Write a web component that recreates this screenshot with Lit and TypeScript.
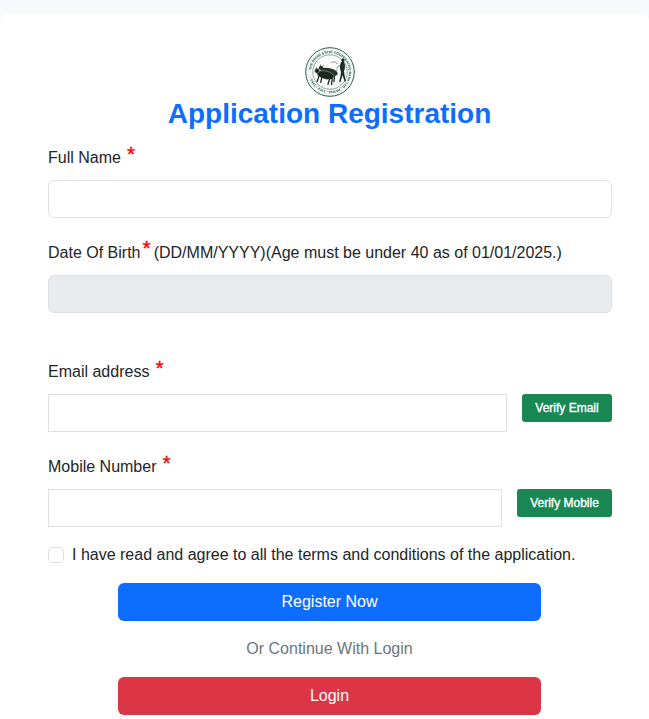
import { LitElement, html, css, svg } from "lit";
import { customElement } from "lit/decorators.js";

const logo = svg`<svg class="logo" viewBox="0 0 50 50" width="50" height="50" aria-hidden="true">
  <defs><path id="ring" d="M25 25 m-18.9 0 a18.9 18.9 0 1 1 37.8 0 a18.9 18.9 0 1 1 -37.8 0"/></defs>
  <circle cx="25" cy="25" r="24.3" fill="#f2f7f3" stroke="#2f5f4c" stroke-width="1"/>
  <circle cx="25" cy="25" r="17.2" fill="#fbfdfb" stroke="#4a7563" stroke-width="0.6"/>
  <text class="ring"><textPath href="#ring" startOffset="2">THE BIHAR STATE COOPERATIVE BANK LTD., PATNA · 1914 - 1964 ·</textPath></text>
  <g transform="rotate(14 21 28)">
    <ellipse class="ox" cx="23.5" cy="24.2" rx="8.6" ry="3.8"/>
    <circle class="ox" cx="14.5" cy="22.4" r="2.3"/>
    <path class="leg" d="M17.5 26 l-.4 6 M29.5 26 l.8 7"/>
    <ellipse class="ox front" cx="20.5" cy="28.2" rx="8.8" ry="4"/>
    <circle class="ox front" cx="11.3" cy="26.1" r="2.4"/>
    <path class="leg" d="M14.5 30 l-.5 7 M17.5 30.5 l.2 6.5 M25.5 30.5 l-.4 6.5 M27.8 29.5 l1 7"/>
    <path class="horn" d="M10.3 24.4 l-.9 -1.8 M12.2 24.4 l.8 -1.8 M13.8 20.8 l-.8 -1.8 M15.5 20.8 l.8 -1.8"/>
  </g>
  <path class="man" d="M38 11.5 a1.7 1.7 0 1 1 -.1 0z M36 15 l3-.3 1 3.6 -.2 3.3 -.8 3 1.1 6.5 .9 3.2 -1.5 .2 -1.9 -6.2 -1.2 3.8 -.9 3 -1.4 -.2 1.4 -6.2 .5 -3.6 -.9 -3.2 -.2 -3 z"/>
  <path class="line" d="M36 17.5 l-3.4 3 -1.4 1.2 M25.6 15.8 c2.4-1.6 5-1.2 6.6 1.2 M26.5 26 l6.5 -3"/>
</svg>`;

@customElement("app-root")
export class AppRoot extends LitElement {
  static styles = css`
    :host {
      display: block;
      height: 719px;
      overflow: hidden;
      background: #f8f9fa;
      font-family: "Liberation Sans", Arial, sans-serif;
      color: #212529;
      font-size: 16px;
    }
    .card {
      margin-top: 14px;
      height: 705px;
      box-sizing: border-box;
      background: #fff;
      border-top-left-radius: 8px;
      border-top-right-radius: 8px;
      padding: 33px 37px 0 48px;
    }
    .head {
      display: flex;
      flex-direction: column;
      align-items: center;
    }
    .logo { display: block; filter: blur(0.25px); }
    .ring {
      font-family: "Liberation Sans", Arial, sans-serif;
      font-size: 3.35px;
      font-weight: 700;
      fill: #24503e;
      letter-spacing: 0.03px;
    }
    .ox { fill: #26352c; }
    .front { fill: #1a271f; stroke: #fbfdfb; stroke-width: 0.3; }
    .leg { fill: none; stroke: #1a271f; stroke-width: 1.3; }
    .horn { fill: none; stroke: #26352c; stroke-width: 0.5; }
    .man { fill: #1f2d24; }
    .line { fill: none; stroke: #33463a; stroke-width: 0.55; }
    h1 {
      margin: 0 1px 0 0;
      height: 34px;
      line-height: 34px;
      font-size: 28px;
      font-weight: 700;
      color: #0d6efd;
    }
    .form { display: flex; flex-direction: column; margin-top: 15px; }
    label {
      display: flex;
      align-items: center;
      height: 24px;
      line-height: 24px;
      margin-bottom: 10px;
    }
    .star {
      color: #f00;
      font-size: 21px;
      line-height: 24px;
      position: relative;
      top: -4px;
      -webkit-text-stroke: 0.35px #f00;
    }
    .gap { margin-left: 6px; }
    .big { margin-left: 2px; top: -5px; }
    .hint { margin-left: 3px; }
    .control {
      display: block;
      width: 100%;
      box-sizing: border-box;
      height: 38px;
      border: 1px solid #dee2e6;
      background: #fff;
      padding: 0;
      margin: 0;
      font: inherit;
      outline: none;
    }
    .round { border-radius: 6px; }
    .field-a { margin-bottom: 23px; }
    .field-b { margin-bottom: 47px; }
    .field-c { margin-bottom: 23px; }
    .field-d { margin-bottom: 20px; }
    .disabled { background: #e9ecef; }
    .row { display: flex; align-items: flex-start; }
    .row .control { flex: 1 1 auto; min-width: 0; }
    .verify {
      flex: none;
      height: 28px;
      box-sizing: border-box;
      border: 0;
      border-radius: 3px;
      background: #198754;
      color: #fff;
      font: 400 12px "Liberation Sans", Arial, sans-serif;
      -webkit-text-stroke: 0.35px #fff;
      padding: 0;
    }
    .email { width: 90px; margin-left: 15px; }
    .mobile { width: 95px; margin-left: 15px; }
    .check {
      display: flex;
      align-items: center;
      height: 16px;
      margin-bottom: 20px;
    }
    .box {
      width: 16px;
      height: 16px;
      box-sizing: border-box;
      border: 1px solid #dee2e6;
      border-radius: 4px;
      background: #fff;
      margin-right: 8px;
      flex: none;
    }
    .actions {
      display: flex;
      flex-direction: column;
      align-items: center;
      margin-right: 1px;
    }
    .cta {
      width: 423px;
      height: 38px;
      border: 0;
      border-radius: 6px;
      color: #fff;
      font: 16px "Liberation Sans", Arial, sans-serif;
      padding: 0;
    }
    .blue { background: #0d6efd; }
    .red { background: #dc3545; }
    .or {
      height: 56px;
      line-height: 56px;
      color: #6c757d;
    }
  `;

  render() {
    return html`
      <div class="card">
        <div class="head">
          ${logo}
          <h1>Application Registration</h1>
        </div>
        <div class="form">
          <label>Full Name <span class="star gap">*</span></label>
          <input class="control round field-a" type="text" />

          <label>Date Of Birth<span class="star big">*</span><span class="hint">(DD/MM/YYYY)(Age must be under 40 as of 01/01/2025.)</span></label>
          <input class="control round disabled field-b" type="text" disabled />

          <label>Email address <span class="star gap">*</span></label>
          <div class="row field-c">
            <input class="control" type="text" />
            <button class="verify email">Verify Email</button>
          </div>

          <label>Mobile Number <span class="star gap">*</span></label>
          <div class="row field-d">
            <input class="control" type="text" />
            <button class="verify mobile">Verify Mobile</button>
          </div>

          <div class="check">
            <span class="box"></span>
            <span>I have read and agree to all the terms and conditions of the application.</span>
          </div>

          <div class="actions">
            <button class="cta blue">Register Now</button>
            <div class="or">Or Continue With Login</div>
            <button class="cta red">Login</button>
          </div>
        </div>
      </div>
    `;
  }
}
